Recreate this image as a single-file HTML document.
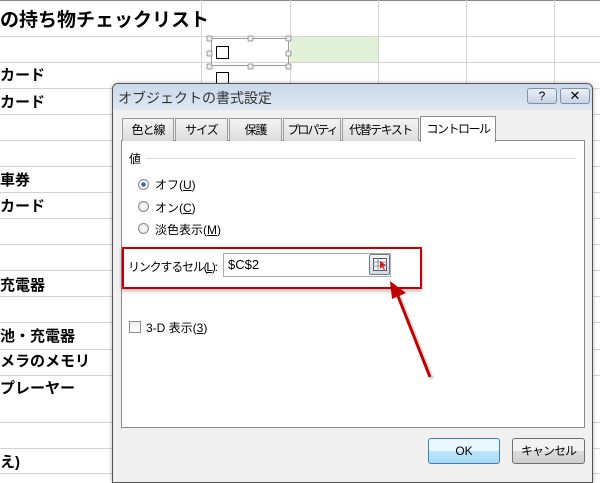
<!DOCTYPE html>
<html><head><meta charset="utf-8"><style>
*{margin:0;padding:0;box-sizing:border-box}
body{width:600px;height:477px;overflow:hidden;background:#fff;position:relative;font-family:"Liberation Sans","Noto Sans CJK JP",sans-serif}
.a{position:absolute}
.h{position:absolute;left:0;width:600px;height:1px;background:#d4d4d4}
.v{position:absolute;top:0;height:477px;width:1px;background:#d4d4d4}
.cell{position:absolute;left:0;font-size:15px;font-weight:bold;color:#000;white-space:nowrap}
.tab{position:absolute;top:118px;height:23px;border:1px solid #9a9a9a;border-bottom:none;background:linear-gradient(#f4f4f4,#dcdcdc);font-size:12px;letter-spacing:-1px;text-align:center;line-height:22px;color:#000;white-space:nowrap;overflow:hidden}
.t{position:absolute;font-size:12px;color:#000;white-space:nowrap}
.rad{position:absolute;width:11px;height:11px;border-radius:50%;border:1px solid #8a8a8a;background:radial-gradient(#fff,#dcdcdc)}
.btn{position:absolute;height:26px;border:1px solid #707070;border-radius:3px;background:linear-gradient(#f2f2f2 50%,#dcdcdc 50%,#d0d0d0);font-size:12px;text-align:center;line-height:24px}
</style></head><body>
<div class="a" style="left:0;top:0;width:600px;height:1px;background:#888"></div>
<div class="h" style="top:36px"></div><div class="h" style="top:62px"></div><div class="h" style="top:88px"></div><div class="h" style="top:114px"></div><div class="h" style="top:140px"></div><div class="h" style="top:166px"></div><div class="h" style="top:192px"></div><div class="h" style="top:218px"></div><div class="h" style="top:244px"></div><div class="h" style="top:270px"></div><div class="h" style="top:296px"></div><div class="h" style="top:322px"></div><div class="h" style="top:349px"></div><div class="h" style="top:375px"></div><div class="h" style="top:422px"></div><div class="h" style="top:448px"></div><div class="h" style="top:473px"></div>
<div class="v" style="left:201px"></div><div class="v" style="left:290px"></div><div class="v" style="left:378px"></div><div class="v" style="left:466px"></div><div class="v" style="left:554px"></div>
<div class="a" style="left:290px;top:37px;width:88px;height:25px;background:#e1f1d7"></div>
<div class="cell" style="top:5px;font-size:19px">の持ち物チェックリスト</div>
<div class="cell" style="top:64px">カード</div>
<div class="cell" style="top:91px">カード</div>
<div class="cell" style="top:169px">車券</div>
<div class="cell" style="top:195px">カード</div>
<div class="cell" style="top:274px">充電器</div>
<div class="cell" style="top:325px">池・充電器</div>
<div class="cell" style="top:350px">メラのメモリ</div>
<div class="cell" style="top:377px">プレーヤー</div>
<div class="cell" style="top:451px">え)</div>
<div class="a" style="left:211px;top:38px;width:78px;height:28px;border:1px solid #999"></div>
<div class="a" style="left:216px;top:46px;width:13px;height:13px;border:1px solid #000;background:#fff"></div>
<div class="a" style="left:216px;top:72px;width:13px;height:13px;border:1px solid #000;background:#fff"></div>
<svg class="a" style="left:205px;top:34px" width="90" height="40"><g fill="#eee" stroke="#999"><rect x="2" y="2" width="5" height="5" rx="1"/><rect x="43" y="2" width="5" height="5" rx="1"/><rect x="81" y="2" width="5" height="5" rx="1"/><rect x="2" y="17" width="5" height="5" rx="1"/><rect x="81" y="17" width="5" height="5" rx="1"/><rect x="2" y="30" width="5" height="5" rx="1"/><rect x="43" y="30" width="5" height="5" rx="1"/><rect x="81" y="30" width="5" height="5" rx="1"/></g></svg>
<!-- dialog -->
<div class="a" style="left:112px;top:83px;width:481px;height:400px;border:1px solid #555;border-radius:6px 6px 0 0;background:#f0f0f0;box-shadow:0 0 4px rgba(0,0,0,.3)"></div>
<div class="a" style="left:113px;top:84px;width:479px;height:26px;border-radius:5px 5px 0 0;background:linear-gradient(#c9d8e9,#dfe8f2)"></div>
<div class="t" style="left:118px;top:88px;font-size:14px;color:#333">オブジェクトの書式設定</div>
<div class="btn" style="left:527px;top:88px;width:30px;height:16px;line-height:14px;border-color:#8090a8;background:linear-gradient(#e8eef6,#c8d4e4);font-size:12px">?</div>
<div class="btn" style="left:560px;top:88px;width:30px;height:16px;line-height:14px;border-color:#8090a8;background:linear-gradient(#e8eef6,#c8d4e4);font-size:13px">✕</div>
<div class="a" style="left:121px;top:140px;width:464px;height:288px;border:1px solid #8a8a8a;background:#fff"></div>
<div class="tab" style="left:122px;width:52px">色と線</div>
<div class="tab" style="left:175px;width:53px">サイズ</div>
<div class="tab" style="left:229px;width:53px">保護</div>
<div class="tab" style="left:283px;width:58px;letter-spacing:-2px">プロパティ</div>
<div class="tab" style="left:342px;width:77px;letter-spacing:-1.5px">代替テキスト</div>
<div class="tab" style="left:420px;top:116px;width:76px;height:26px;background:#fff;border-color:#8a8a8a;letter-spacing:-1.5px;line-height:24px">コントロール</div>
<div class="t" style="left:129px;top:150px">値</div>
<div class="a" style="left:146px;top:158px;width:430px;height:1px;background:#d5dfe5"></div>
<div class="rad" style="left:138px;top:179px;background:radial-gradient(#2a6cb8 30%,#fff 40%,#ddd)"></div><div class="t" style="left:155px;top:176px">オフ(<u>U</u>)</div>
<div class="rad" style="left:138px;top:201px"></div><div class="t" style="left:155px;top:199px">オン(<u>C</u>)</div>
<div class="rad" style="left:138px;top:223px"></div><div class="t" style="left:155px;top:221px">淡色表示(<u>M</u>)</div>
<div class="a" style="left:122px;top:247px;width:300px;height:42px;border:2px solid #c00000;box-shadow:0 2px 4px rgba(0,0,0,.3)"></div>
<div class="t" style="left:128px;top:258px;letter-spacing:-1.2px">リンクするセル(<u>L</u>):</div>
<div class="a" style="left:223px;top:253px;width:168px;height:24px;border:1px solid #aaa;background:#fff"></div>
<div class="t" style="left:228px;top:257px;font-size:13px">$C$2</div>
<div class="a" style="left:369px;top:254px;width:21px;height:21px;border:1px solid #6a7a8a;border-radius:2px;background:linear-gradient(#f4f6f8,#d4dbe3)"></div>
<svg class="a" style="left:373px;top:258px" width="14" height="13"><rect x="0.5" y="0.5" width="13" height="12" fill="#fff" stroke="#556"/><path d="M0 4h14M0 8h14M5 0v13" stroke="#889"/><path d="M7 3l6 4-3 1 2 3-1 1-2-3-2 2z" fill="#d02020"/></svg>
<div class="a" style="left:129px;top:321px;width:12px;height:12px;border:1px solid #8a8a8a;background:linear-gradient(#eee,#fff)"></div>
<div class="t" style="left:146px;top:319px">3-D 表示(<u>3</u>)</div>
<svg class="a" style="left:380px;top:275px" width="60" height="110"><line x1="50" y1="102" x2="17" y2="18" stroke="#000" stroke-opacity=".15" stroke-width="4" transform="translate(2,2)"/><line x1="50" y1="102" x2="16" y2="16" stroke="#c00000" stroke-width="3"/><path d="M10 6 L26 18 L12 24 Z" fill="#c00000"/></svg>
<div class="btn" style="left:428px;top:438px;width:72px;border-color:#3c7fb1;background:linear-gradient(#eaf6fd 50%,#bee6fd 50%,#a7d9f5)">OK</div>
<div class="btn" style="left:512px;top:438px;width:73px;letter-spacing:-1px">キャンセル</div>
</body></html>
